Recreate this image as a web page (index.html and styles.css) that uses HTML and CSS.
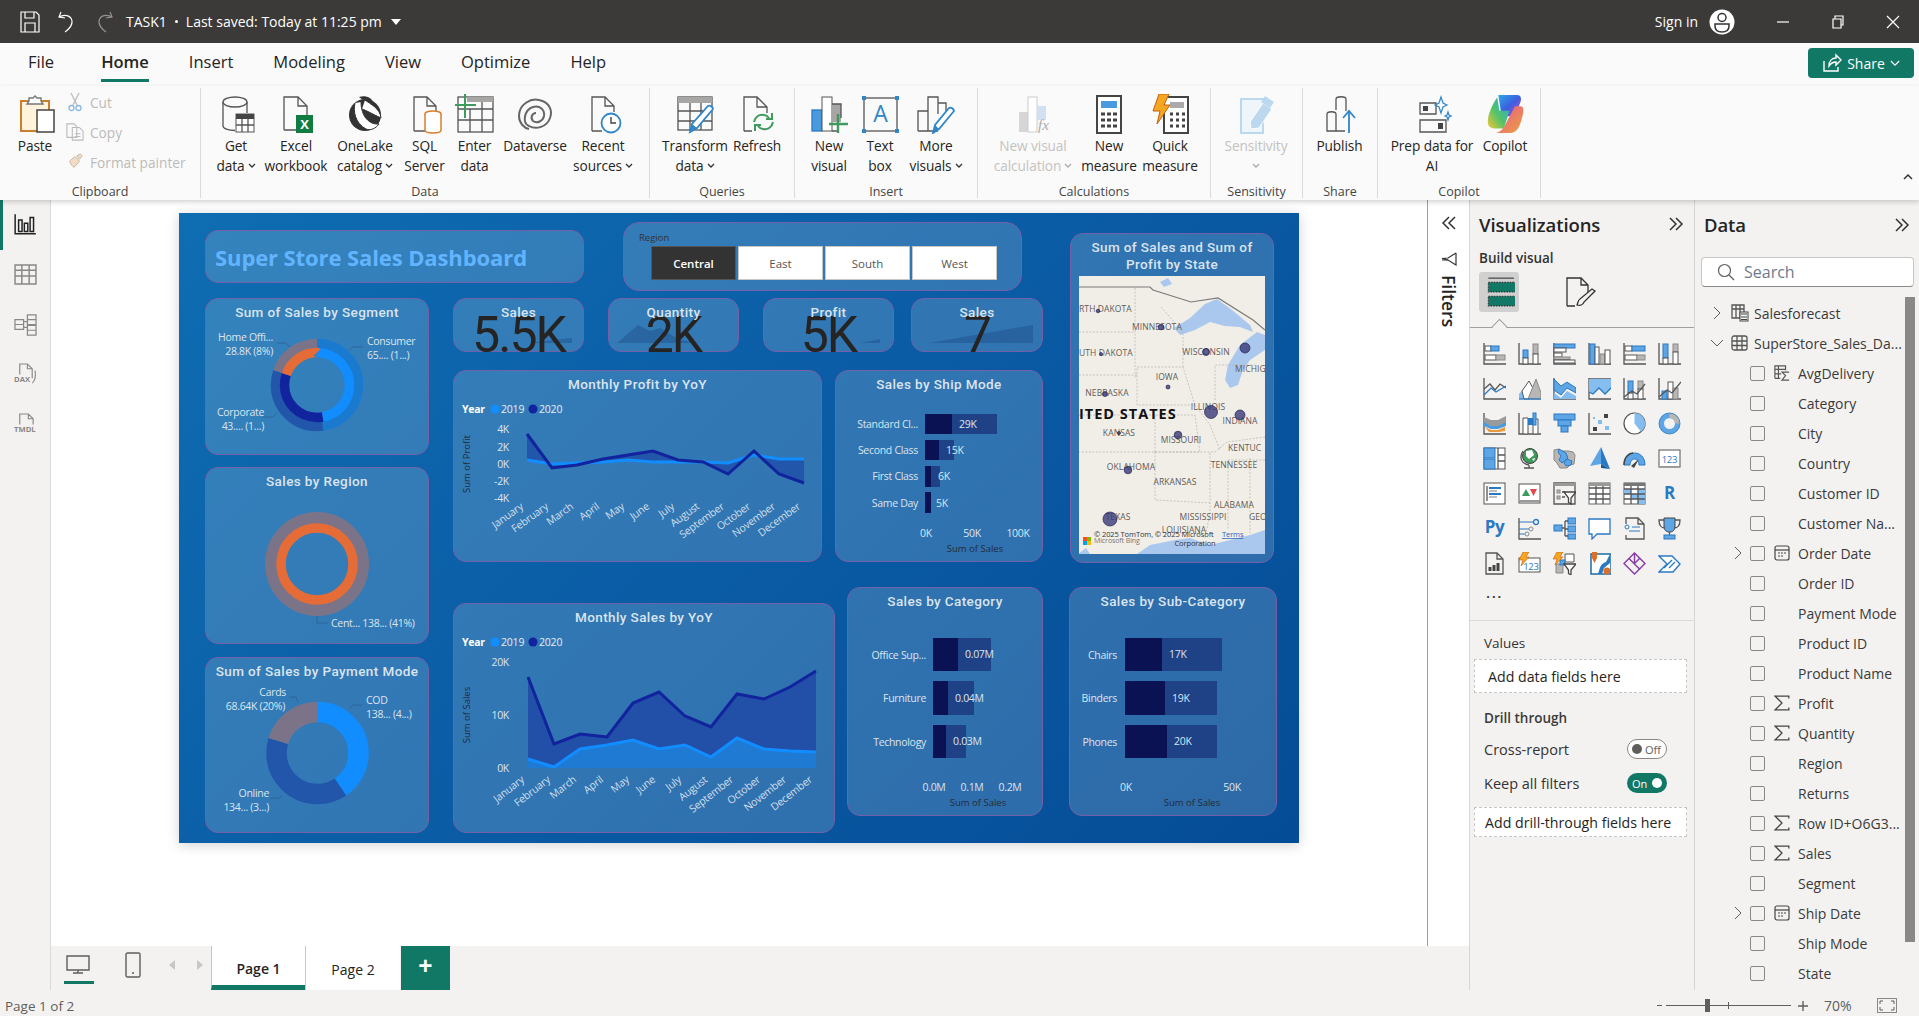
FILE: index.html
```html
<!DOCTYPE html>
<html lang="en">
<head>
<meta charset="utf-8">
<title>TASK1 - Power BI Desktop</title>
<link rel="stylesheet" href="styles.css">
</head>
<body>
<div class="app">

<header class="titlebar">
  <div class="tb-left">
    <svg class="tb-ic" viewBox="0 0 20 22"><path class="tl" d="M1 1h15l3 3v17H1zM5 1v6h9V1M5 21v-9h10v9"/></svg>
    <svg class="tb-ic" viewBox="0 0 20 22"><path class="tl" d="M4 1 2 6l6 1M2 6c5-3 12-2 13 4 .6 4-3 8-7 11"/></svg>
    <svg class="tb-ic dim" viewBox="0 0 20 22"><path class="tl" d="M16 1l2 5-6 1M18 6c-5-3-12-2-13 4-.6 4 3 8 7 11"/></svg>
    <span class="tb-name">TASK1</span><span class="tb-dot"></span><span class="tb-saved">Last saved: Today at 11:25 pm</span><span class="tb-caret"></span>
  </div>
  <div class="tb-right">
    <span class="tb-sign">Sign in</span>
    <svg class="tb-av" viewBox="0 0 26 26"><circle cx="13" cy="13" r="12.5" fill="#fff"/><circle cx="13" cy="8.5" r="4" fill="none" stroke="#333" stroke-width="1.5"/><path d="M6 15h14v2c0 4-3 6-7 6s-7-2-7-6z" fill="none" stroke="#333" stroke-width="1.5"/></svg>
    <svg class="tb-win w-min" viewBox="0 0 14 14"><path class="tl" d="M1 7h12"/></svg>
    <svg class="tb-win w-max" viewBox="0 0 14 14"><path class="tl" d="M2 4h8v9H2zM4 4V1h8v9h-2"/></svg>
    <svg class="tb-win w-close" viewBox="0 0 14 14"><path class="tl" d="M1 1l12 12M13 1 1 13"/></svg>
  </div>
</header>

<nav class="tabs">
  <span class="tab">File</span>
  <span class="tab tab-on">Home</span>
  <span class="tab">Insert</span>
  <span class="tab">Modeling</span>
  <span class="tab">View</span>
  <span class="tab">Optimize</span>
  <span class="tab">Help</span>
  <button class="share"><svg class="share-ic" viewBox="0 0 20 20"><path d="M2 8v10h14v-4M7 13c0-5 3-8 7-8V2l5 5-5 5V9c-3 0-5 1-7 4z" fill="none" stroke="#fff" stroke-width="1.4"/></svg>Share<svg class="share-ch" viewBox="0 0 12 8"><path d="M1 1l5 5 5-5" fill="none" stroke="#fff" stroke-width="1.4"/></svg></button>
</nav>

<section class="ribbon">
  <div class="grp g-clip">
    <div class="grp-body cols-clip">
      <div class="ri">
        <svg class="ric" viewBox="0 0 40 40"><path d="M6 7h28v30H6z" fill="#fff3dc" stroke="#c8802a" stroke-width="2"/><path d="M14 7V4h4l2-2 2 2h4v3l2 3H12z" fill="#fff" stroke="#777" stroke-width="1.4"/><rect x="22" y="16" width="17" height="22" fill="#fff" stroke="#444" stroke-width="1.5"/></svg>
        <span class="rl">Paste</span>
      </div>
      <div class="rsmall">
        <div class="rs"><svg class="rs-ic" viewBox="0 0 16 20"><path d="M4 1l6 12M12 1 6 13" fill="none" stroke="#bbb" stroke-width="1.3"/><circle cx="4.500" cy="16" r="2.500" fill="none" stroke="#8cb8dc" stroke-width="1.3"/><circle cx="11.500" cy="16" r="2.500" fill="none" stroke="#8cb8dc" stroke-width="1.3"/></svg>Cut</div>
        <div class="rs"><svg class="rs-ic" viewBox="0 0 20 20"><path d="M1 1h8l3 3v12H1zM7 5h8l4 4v10H7zM10 12h6M10 15h6" fill="#fafafa" stroke="#bbb" stroke-width="1.2"/></svg>Copy</div>
        <div class="rs"><svg class="rs-ic" viewBox="0 0 20 20"><path d="M12 3l4-2 2 2-3 4zM4 9l6-5 5 5-6 7c-2-1-4-4-5-7z" fill="#f3dcc4" stroke="#c9b8a8" stroke-width="1.1"/></svg>Format painter</div>
      </div>
    </div>
    <div class="gl">Clipboard</div>
  </div>

  <div class="grp g-data">
    <div class="grp-body cols-data">
      <div class="ri"><svg class="ric" viewBox="0 0 40 40"><ellipse class="ln" cx="19" cy="8" rx="12" ry="5"/><path class="ln" d="M7 8v24c0 2.500 5 4.500 12 4.500M31 8v11"/><rect class="wh" x="20" y="20" width="18" height="18"/><rect class="dk" x="20" y="20" width="18" height="5"/><path class="ln" d="M20 31h18M26 25v13M32 25v13"/></svg><span class="rl">Get</span><span class="rl">data<svg class="cv" viewBox="0 0 8 6"><path d="M1 1l3 3 3-3"/></svg></span></div>
      <div class="ri"><svg class="ric" viewBox="0 0 40 40"><path class="ln" d="M8 36V3h14l9 9v10M22 3v9h9M8 36h12"/><rect x="20" y="21" width="17" height="18" fill="#107c41"/><text class="xl" x="28.500" y="35">X</text></svg><span class="rl">Excel</span><span class="rl">workbook</span></div>
      <div class="ri"><svg class="ric" viewBox="0 0 40 40"><circle cx="20" cy="21" r="16" fill="#333"/><path d="M10 9c-2 8 0 20 11 26 5 2 10-1 13-5-10 1-18-8-18-22M20 6c5 4 15 8 16 18-7-3-13-7-19-9" fill="#fff" stroke="#333"/><path d="M14 3c6-2 12 0 14 5-5-1-10-1-14-5z" fill="#333"/></svg><span class="rl">OneLake</span><span class="rl">catalog<svg class="cv" viewBox="0 0 8 6"><path d="M1 1l3 3 3-3"/></svg></span></div>
      <div class="ri"><svg class="ric" viewBox="0 0 40 40"><path class="ln" d="M9 37V3h13l9 9v5M22 3v9h9M9 37h11"/><ellipse cx="28" cy="20" rx="8" ry="3" fill="#fff" stroke="#d8802c" stroke-width="1.5"/><path d="M20 20v16c0 2 3 3 8 3s8-1 8-3V20" fill="#fff" stroke="#d8802c" stroke-width="1.5"/></svg><span class="rl">SQL</span><span class="rl">Server</span></div>
      <div class="ri"><svg class="ric" viewBox="0 0 40 40"><rect class="ln" x="3" y="3" width="35" height="35"/><rect class="gyf" x="12" y="3" width="26" height="5"/><path class="ln" d="M3 15h35M3 26h35M15 15v23M27 8v30"/><path d="M10 0v24M0 11h21" stroke="#3f9a5e" stroke-width="2" fill="none"/></svg><span class="rl">Enter</span><span class="rl">data</span></div>
      <div class="ri"><svg class="ric" viewBox="0 0 40 40"><path d="M4 22C4 10 16 4 24 6c10 2 14 10 11 18-3 9-14 12-21 8C7 29 9 16 18 13c7-2 12 3 11 9-1 5-7 8-11 5-3-3-1-8 3-8" fill="none" stroke="#666" stroke-width="2"/><path d="M4 22c0 7 5 12 10 13" fill="none" stroke="#666" stroke-width="2"/></svg><span class="rl">Dataverse</span></div>
      <div class="ri"><svg class="ric" viewBox="0 0 40 40"><path class="ln" d="M9 37V3h13l9 9v6M22 3v9h9M9 37h10"/><circle cx="28" cy="29" r="9.500" fill="#fff" stroke="#2f86c9" stroke-width="1.800"/><path d="M28 23v6h5" fill="none" stroke="#444" stroke-width="1.400"/></svg><span class="rl">Recent</span><span class="rl">sources<svg class="cv" viewBox="0 0 8 6"><path d="M1 1l3 3 3-3"/></svg></span></div>
    </div>
    <div class="gl">Data</div>
  </div>

  <div class="grp g-query">
    <div class="grp-body cols-query">
      <div class="ri"><svg class="ric" viewBox="0 0 40 40"><rect class="ln" x="3" y="3" width="34" height="33"/><rect class="gyf" x="3" y="3" width="34" height="6"/><path class="ln" d="M3 17h34M3 27h34M15 9v27M26 9v27"/><path d="M15 38l2-8 16-18c2-1 5 1 5 3L22 34z" fill="#fff" stroke="#2f86c9" stroke-width="1.800"/><path d="M15 39l2-9 5 4z" fill="#2f86c9"/></svg><span class="rl">Transform</span><span class="rl">data<svg class="cv" viewBox="0 0 8 6"><path d="M1 1l3 3 3-3"/></svg></span></div>
      <div class="ri"><svg class="ric" viewBox="0 0 40 40"><path class="ln" d="M7 37V3h13l10 10v6M20 3v10h10M7 37h8"/><path d="M17 28c1-5 5-8 10-7 3 0 4 2 5 3M36 28c-1 5-5 8-10 7-3 0-4-2-5-3" fill="none" stroke="#3f9a5e" stroke-width="2"/><path d="M35 19v6h-6M18 37v-6h6" fill="none" stroke="#3f9a5e" stroke-width="2"/></svg><span class="rl">Refresh</span></div>
    </div>
    <div class="gl">Queries</div>
  </div>

  <div class="grp g-insert">
    <div class="grp-body cols-insert">
      <div class="ri"><svg class="ric" viewBox="0 0 40 40"><rect x="3" y="16" width="10" height="21" fill="#4a9ae0" stroke="#2b79c2" stroke-width="1.300"/><rect class="wh" x="13" y="3" width="10" height="34"/><rect class="gyf" x="23" y="10" width="9" height="18"/><path class="ln" d="M23 10h9v14M23 37h5"/><path d="M29 20v19M20 30h19" stroke="#3f9a5e" stroke-width="2.400" fill="none"/></svg><span class="rl">New</span><span class="rl">visual</span></div>
      <div class="ri"><svg class="ric" viewBox="0 0 40 40"><rect class="ln" x="4" y="4" width="33" height="33"/><g class="hd"><rect x="2" y="2" width="4" height="4"/><rect x="35" y="2" width="4" height="4"/><rect x="2" y="35" width="4" height="4"/><rect x="35" y="35" width="4" height="4"/></g><text class="ta" x="20.500" y="28">A</text></svg><span class="rl">Text</span><span class="rl">box</span></div>
      <div class="ri"><svg class="ric" viewBox="0 0 40 40"><path class="ln" d="M2 37V17h10M12 37V3h10v17M22 37h-20M22 9h8v8"/><path d="M17 39l2-8 14-17c2-1 5 1 5 3L23 35z" fill="#fff" stroke="#2f86c9" stroke-width="1.800"/><path d="M17 39l2-8 4 4z" fill="#2f86c9"/></svg><span class="rl">More</span><span class="rl">visuals<svg class="cv" viewBox="0 0 8 6"><path d="M1 1l3 3 3-3"/></svg></span></div>
    </div>
    <div class="gl">Insert</div>
  </div>

  <div class="grp g-calc">
    <div class="grp-body cols-calc">
      <div class="ri off"><svg class="ric" viewBox="0 0 40 40"><rect x="6" y="18" width="9" height="20" fill="#d6d6d6"/><rect x="15" y="3" width="9" height="35" fill="#fff" stroke="#ccc"/><rect x="24" y="12" width="9" height="14" fill="#cfe2f4"/><text class="fx" x="25" y="36">fx</text></svg><span class="rl">New visual</span><span class="rl">calculation<svg class="cv" viewBox="0 0 8 6"><path d="M1 1l3 3 3-3"/></svg></span></div>
      <div class="ri"><svg class="ric" viewBox="0 0 40 40"><rect x="8" y="2" width="24" height="37" fill="#fff" stroke="#444" stroke-width="2"/><rect x="12" y="7" width="16" height="7" fill="#4a9ae0"/><path d="M12 20h4M18 20h4M24 20h4M12 26h4M18 26h4M24 26h4M12 32h4M18 32h4M24 32h4" stroke="#444" stroke-width="3"/></svg><span class="rl">New</span><span class="rl">measure</span></div>
      <div class="ri"><svg class="ric" viewBox="0 0 40 40"><rect x="14" y="3" width="24" height="36" fill="#fff" stroke="#444" stroke-width="2"/><rect x="20" y="8" width="14" height="6" fill="#aaa"/><path d="M20 20h3M26 20h3M32 20h3M20 26h3M26 26h3M32 26h3M20 32h3M26 32h3M32 32h3" stroke="#444" stroke-width="3"/><path d="M9 0h10l-5 11h6L7 30l3-13H3z" fill="#f5a623" stroke="#c75f0a"/></svg><span class="rl">Quick</span><span class="rl">measure</span></div>
    </div>
    <div class="gl">Calculations</div>
  </div>

  <div class="grp g-sens">
    <div class="grp-body cols-one">
      <div class="ri off"><svg class="ric" viewBox="0 0 40 40"><path d="M5 5h22v34H5z" fill="#eef5fb" stroke="#bcd8ee" stroke-width="2"/><path d="M14 28 27 9l9 6-13 19-8 1z" fill="#bcd8ee" stroke="#fff"/><path d="M29 2l9 6-4 6-9-6z" fill="#bcd8ee"/></svg><span class="rl">Sensitivity</span><span class="rl"><svg class="cv" viewBox="0 0 8 6"><path d="M1 1l3 3 3-3"/></svg></span></div>
    </div>
    <div class="gl">Sensitivity</div>
  </div>

  <div class="grp g-share">
    <div class="grp-body cols-one">
      <div class="ri"><svg class="ric" viewBox="0 0 40 40"><path class="ln" d="M16 16V5c0-3 10-3 10 0v12M7 37V20c0-3 9-3 9 0v17zM16 37h9"/><path d="M29 39V18M23 24l6-7 6 7" fill="none" stroke="#2f86c9" stroke-width="1.800"/></svg><span class="rl">Publish</span></div>
    </div>
    <div class="gl">Share</div>
  </div>

  <div class="grp g-copilot">
    <div class="grp-body cols-copilot">
      <div class="ri"><svg class="ric" viewBox="0 0 40 40"><path class="ln" d="M8 9h16v11H8zM8 26h26v12H8z"/><rect class="dk" x="11" y="12" width="5" height="5"/><rect class="dk" x="26" y="29" width="5" height="6"/><path d="M29 3l2 6 4 2-4 2-2 6-2-6-4-2 4-2zM36 18l1 3 2 1-2 1-1 3-1-3-2-1 2-1z" fill="none" stroke="#2f86c9" stroke-width="1.200"/></svg><span class="rl">Prep data for</span><span class="rl">AI</span></div>
      <div class="ri"><svg class="ric" viewBox="3 2 34 36"><defs><linearGradient id="cp1" x1="0" y1="0" x2="1" y2="1"><stop offset="0" stop-color="#2aa8e6"/><stop offset=".5" stop-color="#3c5fe0"/><stop offset="1" stop-color="#c64bd0"/></linearGradient><linearGradient id="cp2" x1="0" y1="1" x2="1" y2="0"><stop offset="0" stop-color="#f4c534"/><stop offset=".45" stop-color="#4fc36a"/><stop offset="1" stop-color="#2aa8e6"/></linearGradient><linearGradient id="cp3" x1="0" y1="0" x2="1" y2="1"><stop offset="0" stop-color="#e0588c"/><stop offset="1" stop-color="#f0a040"/></linearGradient></defs><path d="M14 3h17c3 0 4 3 3 6l-5 13H17z" fill="url(#cp1)"/><path d="M13 5C8 12 3 24 5 30c1 2 3 3 5 3h9l5-16H15z" fill="url(#cp2)"/><path d="M29 13h5c3 0 3 4 2 8-2 8-4 16-11 16H12c4-1 7-4 9-9z" fill="url(#cp3)"/></svg><span class="rl">Copilot</span></div>
    </div>
    <div class="gl">Copilot</div>
  </div>
  <svg class="collapse" viewBox="0 0 10 7"><path d="M1 6l4-4 4 4" fill="none" stroke="#333" stroke-width="1.500"/></svg>
</section>

<main class="main">
  <aside class="rail">
    <div class="rail-on"><svg class="rail-ic" viewBox="0 0 20 20"><path d="M1 1v17h18M4 6h3v10H4zM9 9h3v7H9zM14 4h3v12h-3z" fill="none" stroke="#222" stroke-width="1.300"/></svg></div>
    <div class="rail-it"><svg class="rail-ic" viewBox="0 0 22 22"><path d="M1 2h20v18H1zM1 7h20M1 12.500h20M7.500 2v18M14.500 2v18" fill="none" stroke="#8a8886" stroke-width="1.400"/></svg></div>
    <div class="rail-it"><svg class="rail-ic" viewBox="0 0 24 24"><path d="M14 2h9v10h-9zM14 7h9M14 13h9v10h-9zM14 18h9M1 7h9v10H1zM1 12h9M10 9h4M10 15h4" fill="none" stroke="#8a8886" stroke-width="1.300"/></svg></div>
    <div class="rail-it"><svg class="rail-ic" viewBox="0 0 24 24"><path d="M6 12V1h8l5 5v10M14 1v5h5M22 8c1 5 0 11-3 13" fill="none" stroke="#8a8886" stroke-width="1.200"/><text class="rail-t" x="0" y="20">DAX</text></svg></div>
    <div class="rail-it"><svg class="rail-ic" viewBox="0 0 24 24"><path d="M6 12V1h9l5 5v6M15 1v5h5" fill="none" stroke="#8a8886" stroke-width="1.200"/><text class="rail-t" x="0" y="20">TMDL</text></svg></div>
  </aside>

  <div class="center">
    <div class="center-top">
      <div class="canvas">
        <div class="page">

          <div class="card v-title"><span class="dash-title">Super Store Sales Dashboard</span></div>

          <div class="card v-slicer">
            <div class="sl-label">Region</div>
            <div class="sl-row">
              <span class="sl-btn sl-on">Central</span><span class="sl-btn">East</span><span class="sl-btn">South</span><span class="sl-btn">West</span>
            </div>
          </div>

          <div class="card v-seg">
            <div class="ct">Sum of Sales by Segment</div>
            <svg class="vz" viewBox="205 298 224 157">
              <g transform="rotate(-90 317 385)" fill="none" stroke-width="9.500">
                <circle cx="317" cy="385" r="41.500" pathLength="360" stroke="#1a7ad0" stroke-dasharray="172 188"/>
                <circle cx="317" cy="385" r="41.500" pathLength="360" stroke="#2256ab" stroke-dasharray="117 243" stroke-dashoffset="-172"/>
                <circle cx="317" cy="385" r="41.500" pathLength="360" stroke="#7b7489" stroke-dasharray="71 289" stroke-dashoffset="-289"/>
                <circle cx="317" cy="385" r="32.500" pathLength="360" stroke="#118dff" stroke-dasharray="170 190"/>
                <circle cx="317" cy="385" r="32.500" pathLength="360" stroke="#12239e" stroke-dasharray="119 241" stroke-dashoffset="-170"/>
                <circle cx="317" cy="385" r="32.500" pathLength="360" stroke="#e66c37" stroke-dasharray="71 289" stroke-dashoffset="-289"/>
              </g>
              <path class="lead" d="M277 343h9l4 4M263 417h10l4-4M363 347h-10l-4 3"/>
              <text class="lb ae" x="273" y="341">Home Offi...</text><text class="lb ae" x="273" y="355">28.8K (8%)</text>
              <text class="lb" x="367" y="345">Consumer</text><text class="lb" x="367" y="359">65.... (1...)</text>
              <text class="lb ae" x="264" y="416">Corporate</text><text class="lb ae" x="264" y="430">43.... (1...)</text>
            </svg>
          </div>

          <div class="card v-reg">
            <div class="ct">Sales by Region</div>
            <svg class="vz" viewBox="205 467 224 177">
              <circle cx="317" cy="564" r="46" fill="none" stroke="#7b7489" stroke-width="12"/>
              <circle cx="317" cy="564" r="36" fill="none" stroke="#e66c37" stroke-width="9.500"/>
              <path class="lead" d="M317 616v7h11"/>
              <text class="lb" x="331" y="627">Cent... 138... (41%)</text>
            </svg>
          </div>

          <div class="card v-pay">
            <div class="ct">Sum of Sales by Payment Mode</div>
            <svg class="vz" viewBox="205 657 224 176">
              <g transform="rotate(-90 317.500 753)" fill="none" stroke-width="20.500">
                <circle cx="317.500" cy="753" r="41" pathLength="360" stroke="#118dff" stroke-dasharray="146 214"/>
                <circle cx="317.500" cy="753" r="41" pathLength="360" stroke="#2256ab" stroke-dasharray="141 219" stroke-dashoffset="-146"/>
                <circle cx="317.500" cy="753" r="41" pathLength="360" stroke="#7b7489" stroke-dasharray="73 287" stroke-dashoffset="-287"/>
              </g>
              <path class="lead" d="M289 697h7l2 6M362 705h-9l-3 3M270 798h9l3-2"/>
              <text class="lb ae" x="286" y="696">Cards</text><text class="lb ae" x="285" y="710">68.64K (20%)</text>
              <text class="lb" x="366" y="704">COD</text><text class="lb" x="366" y="718">138... (4...)</text>
              <text class="lb ae" x="269" y="797">Online</text><text class="lb ae" x="269" y="811">134... (3...)</text>
            </svg>
          </div>

          <div class="card v-k1">
            <svg class="vz" viewBox="453 298 131 54"><path class="spark" d="M530 343l22-3 20-2v5z"/></svg>
            <div class="ct">Sales</div><div class="kv kv1">5.5K</div>
          </div>
          <div class="card v-k2">
            <svg class="vz" viewBox="608 298 131 54"><path class="spark" d="M617 343l21-18 12 6 10-3 20 12 20 3z"/></svg>
            <div class="ct">Quantity</div><div class="kv">2K</div>
          </div>
          <div class="card v-k3">
            <svg class="vz" viewBox="763 298 131 54"><path class="spark" d="M860 343l20-4v4z"/></svg>
            <div class="ct">Profit</div><div class="kv">5K</div>
          </div>
          <div class="card v-k4">
            <svg class="vz" viewBox="911 298 132 54"><path class="spark" d="M929 343l104-18v18z"/></svg>
            <div class="ct">Sales</div><div class="kv">7</div>
          </div>

          <div class="card v-profit">
            <div class="ct">Monthly Profit by YoY</div>
            <svg class="vz" viewBox="453 370 369 192">
              <text class="lg" x="462" y="413">Year</text><circle cx="495" cy="409" r="4.500" fill="#118dff"/><text class="lb2" x="501" y="413">2019</text><circle cx="533" cy="409" r="4.500" fill="#12239e"/><text class="lb2" x="539" y="413">2020</text>
              <text class="lb ae" x="509" y="433">4K</text><text class="lb ae" x="509" y="451">2K</text><text class="lb ae" x="509" y="468">0K</text><text class="lb ae" x="509" y="485">-2K</text><text class="lb ae" x="509" y="502">-4K</text>
              <text class="axt" transform="rotate(-90 470 464)" x="470" y="464">Sum of Profit</text>
              <path d="M527 434L552 468 577 465 603 459 628 455 653 451 678 460 703 462 728 474 754 451 779 474 804 483V459L779 459 754 455 728 463 703 462 678 462 653 462 628 460 603 462 577 463 552 464 527 460Z" fill="#2256ab"/>
              <path d="M527 460L552 464 577 463 603 462 628 460 653 462 678 462 703 462 728 463 754 455 779 459 804 459" fill="none" stroke="#118dff" stroke-width="3"/>
              <path d="M527 434L552 468 577 465 603 459 628 455 653 451 678 460 703 462 728 474 754 451 779 474 804 483" fill="none" stroke="#12239e" stroke-width="3"/>
              <g class="mon">
                <text transform="rotate(-36 524 508)" x="524" y="508">January</text><text transform="rotate(-36 549 508)" x="549" y="508">February</text><text transform="rotate(-36 574 508)" x="574" y="508">March</text><text transform="rotate(-36 600 508)" x="600" y="508">April</text><text transform="rotate(-36 625 508)" x="625" y="508">May</text><text transform="rotate(-36 650 508)" x="650" y="508">June</text><text transform="rotate(-36 675 508)" x="675" y="508">July</text><text transform="rotate(-36 700 508)" x="700" y="508">August</text><text transform="rotate(-36 725 508)" x="725" y="508">September</text><text transform="rotate(-36 751 508)" x="751" y="508">October</text><text transform="rotate(-36 776 508)" x="776" y="508">November</text><text transform="rotate(-36 801 508)" x="801" y="508">December</text>
              </g>
            </svg>
          </div>

          <div class="card v-ship">
            <div class="ct">Sales by Ship Mode</div>
            <svg class="vz" viewBox="835 370 208 192">
              <rect class="bl2" x="925" y="414" width="72" height="20"/><rect class="bd" x="925" y="414" width="27" height="20"/>
              <rect class="bl2" x="925" y="440" width="29" height="20"/><rect class="bd" x="925" y="440" width="14" height="20"/>
              <rect class="bl2" x="925" y="466" width="15" height="21"/><rect class="bd" x="925" y="466" width="6" height="21"/>
              <rect class="bd" x="925" y="492" width="6" height="21"/>
              <text class="lb" x="959" y="428">29K</text><text class="lb" x="946" y="454">15K</text><text class="lb" x="938" y="480">6K</text><text class="lb" x="936" y="507">5K</text>
              <text class="lb ae" x="918" y="428">Standard Cl...</text><text class="lb ae" x="918" y="454">Second Class</text><text class="lb ae" x="918" y="480">First Class</text><text class="lb ae" x="918" y="507">Same Day</text>
              <text class="lb am" x="926" y="537">0K</text><text class="lb am" x="972" y="537">50K</text><text class="lb am" x="1018" y="537">100K</text>
              <text class="axt" x="975" y="552">Sum of Sales</text>
            </svg>
          </div>

          <div class="card v-map">
            <div class="ct ct2">Sum of Sales and Sum of<br>Profit by State</div>
            <svg class="map" viewBox="1079 276 186 278">
              <rect x="1079" y="276" width="186" height="278" fill="#f1eee8"/>
              <path class="water" d="M1174 328l16-10 15-14 12-5 15 11 18 15 3 7-13-5-15-1-15-4-15 8-15 5zM1257 332l-17 13-12 20-3 15 5 8 8-3 5-15 7-10 15-10v-15zM1137 554l13-9 25-5 15-2 20 7 20-5 20-5 15-5v24zM1160 282l8-4 4 6-8 3zM1078 554l8-6 4 6z"/>
              <path class="border" d="M1079 287h71l3 3 38 12 27-4 35 22 12 10"/>
              <path class="state" d="M1079 332h56M1135 288v90M1079 375h58M1137 367h46l12 38h-58zM1079 415h116l5 37H1079M1155 415v37M1155 452h60l12-10 38-5M1155 452v48l55 3M1195 405l15 20 10 25M1210 453v60l-5 25M1250 458v75M1228 460h37M1228 460v70M1183 367v-35l-22-25M1215 400v-35h40"/>
              <g class="st">
                <text x="1079" y="312">RTH DAKOTA</text><text class="tm" x="1157" y="330">MINNESOTA</text><text x="1079" y="356">UTH DAKOTA</text><text class="tm" x="1206" y="355">WISCONSIN</text><text x="1235" y="372">MICHIG</text><text class="tm" x="1167" y="380">IOWA</text><text class="tm" x="1107" y="396">NEBRASKA</text><text class="tm" x="1208" y="410">ILLINOIS</text><text class="tm" x="1240" y="424">INDIANA</text><text class="tm" x="1119" y="436">KANSAS</text><text class="tm" x="1181" y="443">MISSOURI</text><text x="1228" y="451">KENTUC</text><text class="tm" x="1131" y="470">OKLAHOMA</text><text class="tm" x="1234" y="468">TENNESSEE</text><text class="tm" x="1175" y="485">ARKANSAS</text><text class="tm" x="1234" y="508">ALABAMA</text><text class="tm" x="1203" y="520">MISSISSIPPI</text><text x="1249" y="520">GEO</text><text class="tm" x="1118" y="520">TEXAS</text><text class="tm" x="1184" y="533">LOUISIANA</text>
              </g>
              <text class="us" x="1079" y="419">ITED STATES</text>
              <g class="bub">
                <circle cx="1098" cy="311" r="1.800"/><circle cx="1161" cy="327" r="2.800"/><circle cx="1206" cy="352" r="3.500"/><circle cx="1245" cy="348" r="5"/><circle cx="1101" cy="354" r="1.500"/><circle cx="1168" cy="387" r="2"/><circle cx="1105" cy="394" r="2.500"/><circle cx="1211" cy="412" r="6.500"/><circle cx="1240" cy="415" r="5"/><circle cx="1119" cy="433" r="1.500"/><circle cx="1178" cy="435" r="3.800"/><circle cx="1128" cy="470" r="3.800"/><circle cx="1110" cy="519" r="7"/>
              </g>
              <rect x="1083" y="537" width="4" height="4" fill="#f25022"/><rect x="1087" y="537" width="4" height="4" fill="#7fba00"/><rect x="1083" y="541" width="4" height="4" fill="#00a4ef"/><rect x="1087" y="541" width="4" height="4" fill="#ffb900"/>
              <text class="attr" x="1094" y="537">© 2025 TomTom, © 2025 Microsoft</text><text class="attr terms" x="1222" y="537">Terms</text><text class="attr bing" x="1094" y="543">Microsoft Bing</text><text class="attr tm" x="1195" y="546">Corporation</text>
            </svg>
          </div>

          <div class="card v-sales">
            <div class="ct">Monthly Sales by YoY</div>
            <svg class="vz" viewBox="453 603 382 230">
              <text class="lg" x="462" y="646">Year</text><circle cx="495" cy="642" r="4.500" fill="#118dff"/><text class="lb2" x="501" y="646">2019</text><circle cx="533" cy="642" r="4.500" fill="#12239e"/><text class="lb2" x="539" y="646">2020</text>
              <text class="lb ae" x="509" y="666">20K</text><text class="lb ae" x="509" y="719">10K</text><text class="lb ae" x="509" y="772">0K</text>
              <text class="axt" transform="rotate(-90 470 715)" x="470" y="715">Sum of Sales</text>
              <path d="M528 677L554 744 580 734 607 737 633 703 659 692 685 716 711 727 737 694 764 699 790 687 816 671V768H528Z" fill="#2250a8"/>
              <path d="M528 759L554 767 580 749 607 745 633 740 659 749 685 745 711 757 737 738 764 749 790 751 816 752V768H528Z" fill="#1f7ad4"/>
              <path d="M528 677L554 744 580 734 607 737 633 703 659 692 685 716 711 727 737 694 764 699 790 687 816 671" fill="none" stroke="#12239e" stroke-width="3"/>
              <path d="M528 759L554 767 580 749 607 745 633 740 659 749 685 745 711 757 737 738 764 749 790 751 816 752" fill="none" stroke="#118dff" stroke-width="3"/>
              <g class="mon">
                <text transform="rotate(-38 525 781)" x="525" y="781">January</text><text transform="rotate(-38 551 781)" x="551" y="781">February</text><text transform="rotate(-38 577 781)" x="577" y="781">March</text><text transform="rotate(-38 604 781)" x="604" y="781">April</text><text transform="rotate(-38 630 781)" x="630" y="781">May</text><text transform="rotate(-38 656 781)" x="656" y="781">June</text><text transform="rotate(-38 682 781)" x="682" y="781">July</text><text transform="rotate(-38 708 781)" x="708" y="781">August</text><text transform="rotate(-38 734 781)" x="734" y="781">September</text><text transform="rotate(-38 761 781)" x="761" y="781">October</text><text transform="rotate(-38 787 781)" x="787" y="781">November</text><text transform="rotate(-38 813 781)" x="813" y="781">December</text>
              </g>
            </svg>
          </div>

          <div class="card v-cat">
            <div class="ct">Sales by Category</div>
            <svg class="vz" viewBox="847 587 196 229">
              <rect class="bl2" x="933" y="638" width="58" height="33"/><rect class="bd" x="933" y="638" width="25" height="33"/>
              <rect class="bl2" x="933" y="681" width="41" height="34"/><rect class="bd" x="933" y="681" width="15" height="34"/>
              <rect class="bl2" x="933" y="725" width="33" height="33"/><rect class="bd" x="933" y="725" width="13" height="33"/>
              <text class="lb" x="965" y="658">0.07M</text><text class="lb" x="955" y="702">0.04M</text><text class="lb" x="953" y="745">0.03M</text>
              <text class="lb ae" x="926" y="659">Office Sup...</text><text class="lb ae" x="926" y="702">Furniture</text><text class="lb ae" x="926" y="746">Technology</text>
              <text class="lb am" x="934" y="791">0.0M</text><text class="lb am" x="972" y="791">0.1M</text><text class="lb am" x="1010" y="791">0.2M</text>
              <text class="axt" x="978" y="806">Sum of Sales</text>
            </svg>
          </div>

          <div class="card v-sub">
            <div class="ct">Sales by Sub-Category</div>
            <svg class="vz" viewBox="1069 587 208 229">
              <rect class="bl2" x="1125" y="638" width="97" height="33"/><rect class="bd" x="1125" y="638" width="37" height="33"/>
              <rect class="bl2" x="1125" y="681" width="92" height="34"/><rect class="bd" x="1125" y="681" width="40" height="34"/>
              <rect class="bl2" x="1125" y="725" width="92" height="33"/><rect class="bd" x="1125" y="725" width="42" height="33"/>
              <text class="lb" x="1169" y="658">17K</text><text class="lb" x="1172" y="702">19K</text><text class="lb" x="1174" y="745">20K</text>
              <text class="lb ae" x="1117" y="659">Chairs</text><text class="lb ae" x="1117" y="702">Binders</text><text class="lb ae" x="1117" y="746">Phones</text>
              <text class="lb am" x="1126" y="791">0K</text><text class="lb am" x="1232" y="791">50K</text>
              <text class="axt" x="1192" y="806">Sum of Sales</text>
            </svg>
          </div>

        </div>
      </div>
      <aside class="filters">
        <svg class="dbl" viewBox="0 0 16 14"><path d="M8 1 2 7l6 6M14 1 8 7l6 6" fill="none" stroke="#333" stroke-width="1.500"/></svg>
        <svg class="funnel" viewBox="0 0 16 14"><path d="M15 1v12l-8-5H1l6 0" fill="none" stroke="#333" stroke-width="1.200"/><path d="M15 1 7 6 1 6.500l6 1.500" fill="none" stroke="#333" stroke-width="1.200"/></svg>
        <span class="f-text">Filters</span>
      </aside>
    </div>

    <div class="pagebar">
      <div class="pb-view pb-on"><svg class="pb-d" viewBox="0 0 24 20"><path d="M1 1h22v14H1zM12 15v3M7 18h10" fill="none" stroke="#605e5c" stroke-width="1.400"/></svg></div>
      <div class="pb-view"><svg class="pb-p" viewBox="0 0 16 26"><rect x="1" y="1" width="14" height="24" rx="1.500" fill="none" stroke="#605e5c" stroke-width="1.400"/><path d="M7 21h2" stroke="#605e5c" stroke-width="1.400"/></svg></div>
      <div class="pb-arrows"><svg class="pb-a" viewBox="0 0 8 12"><path d="M7 1v10L1 6z" fill="#c8c6c4"/></svg><svg class="pb-a" viewBox="0 0 8 12"><path d="M1 1v10l6-5z" fill="#c8c6c4"/></svg></div>
      <div class="ptab ptab-on">Page 1</div>
      <div class="ptab">Page 2</div>
      <div class="padd">+</div>
    </div>
  </div>

  <aside class="viz">
    <div class="p-head"><span class="p-title">Visualizations</span><svg class="dbl" viewBox="0 0 16 14"><path d="M2 1l6 6-6 6M8 1l6 6-6 6" fill="none" stroke="#333" stroke-width="1.500"/></svg></div>
    <div class="p-sub">Build visual</div>
    <div class="modes">
      <div class="mode-on"><svg class="mode-ic" viewBox="0 0 30 30"><path d="M5 2h24" stroke="#333"/><rect x="5" y="6" width="26" height="9" fill="#117865" stroke="#333" stroke-dasharray="1.500 1"/><rect x="5" y="19" width="26" height="9" fill="#117865" stroke="#333" stroke-dasharray="1.500 1"/></svg></div>
      <svg class="mode-fmt" viewBox="0 0 32 30"><path d="M2 29V1h14l7 7v7M16 1v7h7M2 29h8" fill="none" stroke="#333" stroke-width="1.300"/><path d="M12 28c3 1 6 0 7-3l11-11-3-2-12 10c-2 1-2 4-3 6z" fill="none" stroke="#333" stroke-width="1.300"/></svg>
    </div>
    <div class="notch"></div>
    <div class="vgrid">
      <svg class="vi" viewBox="0 0 23 23"><path class="ln" d="M1 1v21h22"/><rect class="wh" x="2" y="4" width="6" height="5"/><rect class="bl" x="8" y="4" width="8" height="5"/><rect class="wh" x="2" y="13" width="11" height="5"/><rect class="gr" x="13" y="13" width="9" height="5"/></svg>
      <svg class="vi" viewBox="0 0 23 23"><path class="ln" d="M1 1v21h22"/><rect class="bl" x="5" y="8" width="5" height="8"/><rect class="wh" x="5" y="16" width="5" height="6"/><rect class="gr" x="15" y="2" width="5" height="10"/><rect class="wh" x="15" y="12" width="5" height="10"/></svg>
      <svg class="vi" viewBox="0 0 23 23"><path class="ln" d="M1 1v21h22"/><rect class="bl" x="1" y="2" width="21" height="4"/><rect class="wh" x="1" y="6" width="12" height="4"/><rect class="wh" x="1" y="11" width="8" height="4"/><rect class="gr" x="1" y="15" width="16" height="2.500"/><rect class="wh" x="1" y="18" width="21" height="3"/></svg>
      <svg class="vi" viewBox="0 0 23 23"><path class="ln" d="M1 1v21h22"/><rect class="bl" x="2" y="2" width="5" height="20"/><rect class="wh" x="7" y="5" width="4" height="17"/><rect class="gr" x="12" y="12" width="5" height="10"/><rect class="wh" x="17" y="8" width="5" height="14"/></svg>
      <svg class="vi" viewBox="0 0 23 23"><path class="ln" d="M1 1v21h22"/><rect class="wh" x="2" y="4" width="7" height="5"/><rect class="bl" x="9" y="4" width="13" height="5"/><rect class="wh" x="2" y="13" width="12" height="5"/><rect class="gr" x="14" y="13" width="8" height="5"/></svg>
      <svg class="vi" viewBox="0 0 23 23"><path class="ln" d="M1 1v21h22"/><rect class="bl" x="5" y="2" width="5" height="14"/><rect class="wh" x="5" y="16" width="5" height="6"/><rect class="gr" x="15" y="2" width="5" height="8"/><rect class="wh" x="15" y="10" width="5" height="12"/></svg>

      <svg class="vi" viewBox="0 0 23 23"><path class="ln" d="M1 1v21h22"/><path class="ln" d="M1 12l6-5 5 6 5-6 6 4"/><path class="lnb" d="M1 18l7-7 5 4 5-3 5-3"/></svg>
      <svg class="vi" viewBox="0 0 23 23"><path class="lbf" d="M1 22v-5l5-6 5 11z"/><path class="wh" d="M4 14l7-10 5 9-5 9H6z"/><path class="gr" d="M14 12l4-10 5 14v6H10z"/><path class="lnb" d="M1 22h22"/></svg>
      <svg class="vi" viewBox="0 0 23 23"><path class="ln" d="M1 1v21h22"/><path class="bl" d="M1 2l7 7 6-4 9 6v5l-9-5-6 7-7-5z"/><path class="lbf" d="M1 16l7 5 6-7 9 5v3H1z"/></svg>
      <svg class="vi" viewBox="0 0 23 23"><path class="ln" d="M1 2h22M1 1v21h22"/><path class="lbf" d="M1 2h22v9l-6 6-6-6-6 6-4-2z"/><path class="lnb" d="M1 15l4 2 6-6 6 6 6-6"/></svg>
      <svg class="vi" viewBox="0 0 23 23"><path class="ln" d="M1 1v21h22"/><rect class="bl" x="5" y="4" width="5" height="12"/><rect class="wh" x="5" y="16" width="5" height="6"/><rect class="gr" x="15" y="4" width="5" height="8"/><rect class="wh" x="15" y="12" width="5" height="10"/><path class="ln" d="M1 20l8-6 5 3 8-10"/></svg>
      <svg class="vi" viewBox="0 0 23 23"><path class="ln" d="M1 1v21h22"/><rect class="bl" x="4" y="14" width="5" height="8"/><rect class="wh" x="10" y="5" width="5" height="17"/><rect class="gr" x="15" y="11" width="5" height="11"/><path class="ln" d="M1 20l8-7 5 3 9-11"/></svg>

      <svg class="vi" viewBox="0 0 23 23"><path class="ln" d="M1 1v21h22"/><path d="M1 5l7 3h7l8-4v7l-7 3H8l-7-3z" fill="#9a9a9a"/><path d="M1 10l7 4h7l8-4v4l-8 3H8l-7-3z" fill="#4a9ae0"/><path d="M2 15l6 3 7 0 7-3v4l-6 1H6z" fill="#e99a3c"/></svg>
      <svg class="vi" viewBox="0 0 23 23"><path class="ln" d="M1 1v21h22"/><path class="wh" d="M5 6h5v16H5zM15 7h5v15h-5z"/><rect class="dk2" x="10" y="6" width="5" height="7"/><rect class="bl" x="15" y="1" width="3" height="12"/></svg>
      <svg class="vi" viewBox="0 0 23 23"><rect class="bl" x="1" y="2" width="21" height="6"/><rect class="bl" x="5" y="8" width="13" height="6"/><rect class="bl" x="8" y="14" width="7" height="6"/></svg>
      <svg class="vi" viewBox="0 0 23 23"><path class="ln" d="M1 1v21h22"/><rect class="dk" x="16" y="2" width="4" height="4"/><rect class="lbf" x="10" y="8" width="4" height="4"/><rect class="lbf" x="5" y="5" width="2" height="2"/><rect class="dk" x="5" y="15" width="4" height="4"/><rect class="lbf" x="17" y="14" width="4" height="4"/></svg>
      <svg class="vi" viewBox="0 0 23 23"><circle cx="11.500" cy="11.500" r="10.500" fill="#fff" stroke="#555" stroke-width="1.200"/><path class="lbf" d="M11.500 1A10.500 10.500 0 0 1 18 19.700L11.500 11.500z"/></svg>
      <svg class="vi" viewBox="0 0 23 23"><circle cx="11.500" cy="11.500" r="8" fill="none" stroke="#5ea5e6" stroke-width="5"/><path d="M11.500 3.500A8 8 0 0 1 19.500 11.500" fill="none" stroke="#b9b7b5" stroke-width="5"/><circle cx="11.500" cy="11.500" r="10.500" fill="none" stroke="#2b79c2" stroke-width=".8"/></svg>

      <svg class="vi" viewBox="0 0 23 23"><rect x="1" y="1" width="21" height="21" fill="#fff" stroke="#555"/><rect class="bl" x="1" y="1" width="11" height="10"/><rect class="bl" x="1" y="12" width="11" height="10"/><path class="ln" d="M15 1v21M15 8h7M15 14h7"/></svg>
      <svg class="vi" viewBox="0 0 23 23"><circle cx="12" cy="9" r="7.500" fill="#3f9a5e" stroke="#444"/><path d="M8 4l6-1 2 5-5 4-3-3zM14 12l3-1-1 3z" fill="#fff"/><path class="ln" d="M5 4c-4 6-2 13 6 14M11 18v3M6 21h10"/></svg>
      <svg class="vi" viewBox="0 0 23 23"><path class="gr" d="M1 3l5-1 1 2h8l5 1 2 3-1 9-4 1-3 3H7l-3-5-3-3z"/><path class="bl" d="M6 2l7 4 2 5-6 5-3-3 2-4-3-4z"/><path class="bl" d="M14 12l5 2-1 4-5 1-2-3z"/></svg>
      <svg class="vi" viewBox="0 0 23 23"><path d="M13 0l9 22-9-5z" fill="#2b79c2"/><path d="M13 0 2 19l11-2z" fill="#5ea5e6"/><path d="M13 17l9 5-9-1z" fill="#1c5a96"/></svg>
      <svg class="vi" viewBox="0 0 23 23"><path class="bl" d="M1 18C1 10 6 6 11.500 6S22 10 22 18h-6c0-3-2-6-4.500-6S7 15 7 18z"/><path d="M1 18C1 10 6 6 10 6" fill="none" stroke="#444" stroke-width="1.500"/><path d="M8 19l8-7-5 9z" fill="#444"/></svg>
      <svg class="vi" viewBox="0 0 23 23"><rect x="1" y="3" width="21" height="17" fill="#fff" stroke="#555"/><rect x="1" y="19" width="21" height="1.500" fill="#999"/><text class="n123" x="11.500" y="15.500">123</text></svg>

      <svg class="vi" viewBox="0 0 23 23"><rect x="1" y="1" width="21" height="21" fill="#fff" stroke="#555"/><path class="ln" d="M4 4v15"/><path d="M6 6h12M6 12h12" stroke="#2b79c2" stroke-width="2"/><path d="M6 9h8M6 15h8" stroke="#aaa" stroke-width="1.500"/></svg>
      <svg class="vi" viewBox="0 0 23 23"><rect x="1" y="2" width="21" height="19" fill="#fff" stroke="#555"/><path d="M4 14l4-7 4 7z" fill="#3f9a5e"/><path d="M12 7h7l-3.500 7z" fill="#e04848"/><rect x="1" y="18" width="21" height="2" fill="#999"/></svg>
      <svg class="vi" viewBox="0 0 23 23"><path class="ln" d="M1 1h21v21H1z"/><rect x="1" y="1" width="21" height="3" fill="#999"/><rect class="gr" x="4" y="8" width="3" height="3"/><rect class="gr" x="4" y="14" width="3" height="3"/><path class="ln" d="M9 10h3M9 15h3"/><path d="M11 10h12l-5 6v6l-2.500-1.500V16z" fill="#fff" stroke="#444" stroke-width="1.300"/></svg>
      <svg class="vi" viewBox="0 0 23 23"><rect x="1" y="1" width="21" height="21" fill="#fff" stroke="#666"/><path class="ln" d="M1 6h21M1 12h21M1 17h21M8 1v21M15 1v21"/><rect x="1" y="1" width="21" height="3" fill="#999"/></svg>
      <svg class="vi" viewBox="0 0 23 23"><rect x="1" y="1" width="21" height="21" fill="#fff" stroke="#555"/><rect x="1" y="1" width="21" height="3" fill="#777"/><rect class="lbf" x="1" y="7" width="7" height="5"/><rect class="lbf" x="15" y="7" width="7" height="5"/><rect class="lbf" x="8" y="12" width="7" height="5"/><rect class="lbf" x="15" y="12" width="7" height="5"/><rect class="lbf" x="15" y="17" width="7" height="5"/><path class="ln" d="M1 7h21M1 12h21M1 17h21M8 4v18M15 4v18"/></svg>
      <svg class="vi" viewBox="0 0 23 23"><text class="rtx" x="11.500" y="17">R</text></svg>

      <svg class="vi" viewBox="0 0 23 23"><text class="pyx" x="11.500" y="16">Py</text></svg>
      <svg class="vi" viewBox="0 0 23 23"><path class="ln" d="M1 1v21h22"/><path d="M1 5h14M1 12h10M1 17h6" stroke="#2b79c2" stroke-width="1.200"/><circle cx="18" cy="5" r="2.500" fill="none" stroke="#2b79c2" stroke-width="1.300"/><circle cx="13" cy="12" r="2" fill="none" stroke="#888"/><circle cx="9" cy="17" r="2" fill="none" stroke="#888"/></svg>
      <svg class="vi" viewBox="0 0 23 23"><rect class="bl" x="1" y="8" width="8" height="6"/><rect class="bl" x="15" y="1" width="8" height="6"/><rect class="bl" x="15" y="9" width="8" height="6"/><rect class="bl" x="15" y="17" width="8" height="5"/><path class="ln" d="M9 11h3M12 4v15M12 4h3M12 12h3M12 19h3"/></svg>
      <svg class="vi" viewBox="0 0 23 23"><path d="M1 2h21v15H9l-5 5v-5H1z" fill="#fff" stroke="#2b79c2" stroke-width="1.300"/></svg>
      <svg class="vi" viewBox="0 0 23 23"><path class="ln" d="M3 7V1h12l6 6v15H3v-4M15 1v6h6"/><circle cx="4" cy="10" r="2" fill="none" stroke="#2b79c2"/><path d="M9 10h8M6 14h11" stroke="#2b79c2"/></svg>
      <svg class="vi" viewBox="0 0 23 23"><path d="M6 1h11v8c0 4-2 6-5.500 6S6 13 6 9z" fill="#5ea5e6" stroke="#444"/><path class="ln" d="M6 3H1c0 5 2 8 6 8M17 3h5c0 5-2 8-6 8M11.500 15v3"/><rect class="bl" x="6" y="18" width="11" height="4"/></svg>

      <svg class="vi" viewBox="0 0 23 23"><path class="ln" d="M3 22V1h11l6 6v15zM14 1v6h6"/><path d="M7 19v-4M11 19v-6M15 19v-8" stroke="#444" stroke-width="3"/></svg>
      <svg class="vi" viewBox="0 0 23 23"><rect x="1" y="6" width="21" height="14" fill="#fff" stroke="#555"/><text class="n123" x="13" y="17.500">123</text><path d="M5 0h6L8 5h3L3 14l2-6H1z" fill="#f5a623" stroke="#c75f0a" stroke-width=".6"/></svg>
      <svg class="vi" viewBox="0 0 23 23"><path class="gr" d="M3 12h7v9H3z"/><path class="wh" d="M12 2h9v8h-9z"/><rect class="bl" x="7" y="8" width="5" height="5"/><path d="M11 12h12l-5 6v5l-2.500-1.500V18z" fill="#fff" stroke="#444" stroke-width="1.300"/><path d="M4 0h6L7 5h3L2 13l2-6H0z" fill="#f5a623" stroke="#c75f0a" stroke-width=".6"/></svg>
      <svg class="vi" viewBox="0 0 23 23"><rect x="3" y="2" width="20" height="20" fill="#fff" stroke="#1c6ea4" stroke-width="1.500"/><path d="M10 22c2-6 2-10 8-12l4-8v9l-6 5-2 6z" fill="#2b79c2"/><path d="M4 0h5v6L6.500 11 4 6z" fill="#d8702c"/><circle cx="19" cy="19" r="3.500" fill="#d8702c"/></svg>
      <svg class="vi" viewBox="0 0 23 23"><path d="M11.500 1 22 11.500 11.500 22 1 11.500z" fill="none" stroke="#8a3fa6" stroke-width="1.500"/><path d="M11.500 1v10.500M6 6.500l11 11M17 6l-5.500 5.500" fill="none" stroke="#8a3fa6" stroke-width="1.500"/></svg>
      <svg class="vi" viewBox="0 0 23 23"><path d="M1 4h13l8 8-7 8H1l8-8z" fill="#fff" stroke="#2b79c2" stroke-width="1.400"/><path d="M6 16 14 8M11 16l6-6" stroke="#2b79c2" stroke-width="1.400"/></svg>
      <span class="vmore">...</span>
    </div>
    <div class="v-div"></div>
    <div class="w-lab">Values</div>
    <div class="well well1">Add data fields here</div>
    <div class="w-head">Drill through</div>
    <div class="w-row"><span>Cross-report</span><span class="tg tg-off"><i></i>Off</span></div>
    <div class="w-row w-row2"><span>Keep all filters</span><span class="tg tg-on">On<i></i></span></div>
    <div class="well well2">Add drill-through fields here</div>
  </aside>

  <aside class="data">
    <div class="p-head d-head"><span class="p-title">Data</span><svg class="dbl" viewBox="0 0 16 14"><path d="M2 1l6 6-6 6M8 1l6 6-6 6" fill="none" stroke="#333" stroke-width="1.500"/></svg></div>
    <div class="search"><svg class="s-ic" viewBox="0 0 18 18"><circle cx="7.500" cy="7.500" r="6" fill="none" stroke="#605e5c" stroke-width="1.200"/><path d="M12 12l5 5" stroke="#605e5c" stroke-width="1.200"/></svg><span>Search</span></div>
    <div class="tree">
      <div class="t-tb"><svg class="chv" viewBox="0 0 9 14"><path d="M1 1l6 6-6 6"/></svg><svg class="t-ic" viewBox="0 0 18 18"><path d="M1 1h12v13H1zM1 5h12M5 1v13M9 1v13" class="ln"/><rect x="9" y="8" width="8" height="9" fill="#f3f2f1" stroke="#444"/><path d="M10 10h6M10 13h6M10 15.500h6" stroke="#444"/></svg><span>Salesforecast</span></div>
      <div class="t-tb"><svg class="chv" viewBox="0 0 14 9"><path d="M1 1l6 6 6-6"/></svg><svg class="t-ic" viewBox="0 0 18 18"><rect class="ln" x="1" y="2" width="15" height="14" rx="2"/><path class="ln" d="M1 7h15M1 11.500h15M6 2v14M11 2v14"/></svg><span>SuperStore_Sales_Da...</span></div>
      <div class="t-f"><span></span><i class="cb"></i><svg class="f-ic" viewBox="0 0 18 18"><path class="ln" d="M1 15V1h12v5M1 5h12M5 1v14M1 10h7M1 15h6"/><path class="ln" d="M17 8h-8l4 4-4 5h8"/></svg><span>AvgDelivery</span></div>
      <div class="t-f"><span></span><i class="cb"></i><span></span><span>Category</span></div>
      <div class="t-f"><span></span><i class="cb"></i><span></span><span>City</span></div>
      <div class="t-f"><span></span><i class="cb"></i><span></span><span>Country</span></div>
      <div class="t-f"><span></span><i class="cb"></i><span></span><span>Customer ID</span></div>
      <div class="t-f"><span></span><i class="cb"></i><span></span><span>Customer Na...</span></div>
      <div class="t-f"><svg class="chv chv-f" viewBox="0 0 9 14"><path d="M1 1l6 6-6 6"/></svg><i class="cb"></i><svg class="f-ic" viewBox="0 0 16 16"><use href="#cal"/></svg><span>Order Date</span></div>
      <div class="t-f"><span></span><i class="cb"></i><span></span><span>Order ID</span></div>
      <div class="t-f"><span></span><i class="cb"></i><span></span><span>Payment Mode</span></div>
      <div class="t-f"><span></span><i class="cb"></i><span></span><span>Product ID</span></div>
      <div class="t-f"><span></span><i class="cb"></i><span></span><span>Product Name</span></div>
      <div class="t-f"><span></span><i class="cb"></i><svg class="f-ic" viewBox="0 0 14 14"><use href="#sig"/></svg><span>Profit</span></div>
      <div class="t-f"><span></span><i class="cb"></i><svg class="f-ic" viewBox="0 0 14 14"><use href="#sig"/></svg><span>Quantity</span></div>
      <div class="t-f"><span></span><i class="cb"></i><span></span><span>Region</span></div>
      <div class="t-f"><span></span><i class="cb"></i><span></span><span>Returns</span></div>
      <div class="t-f"><span></span><i class="cb"></i><svg class="f-ic" viewBox="0 0 14 14"><use href="#sig"/></svg><span>Row ID+O6G3...</span></div>
      <div class="t-f"><span></span><i class="cb"></i><svg class="f-ic" viewBox="0 0 14 14"><use href="#sig"/></svg><span>Sales</span></div>
      <div class="t-f"><span></span><i class="cb"></i><span></span><span>Segment</span></div>
      <div class="t-f"><svg class="chv chv-f" viewBox="0 0 9 14"><path d="M1 1l6 6-6 6"/></svg><i class="cb"></i><svg class="f-ic" viewBox="0 0 16 16"><use href="#cal"/></svg><span>Ship Date</span></div>
      <div class="t-f"><span></span><i class="cb"></i><span></span><span>Ship Mode</span></div>
      <div class="t-f"><span></span><i class="cb"></i><span></span><span>State</span></div>
    </div>
    <div class="scroll"></div>
  </aside>
</main>

<footer class="status">
  <span class="st-l">Page 1 of 2</span>
  <div class="st-r">
    <span class="z-m"></span>
    <div class="z-track"><i class="z-tick"></i><i class="z-thumb"></i></div>
    <svg class="z-p" viewBox="0 0 11 11"><path d="M5.500 0v11M0 5.500h11" stroke="#605e5c" stroke-width="1.500"/></svg>
    <span class="z-v">70%</span>
    <svg class="z-fit" viewBox="0 0 20 15"><rect x=".5" y=".5" width="19" height="14" fill="none" stroke="#8a8886"/><path d="M3 6V3h3M14 3h3v3M3 9v3h3M17 9v3h-3" fill="none" stroke="#605e5c"/></svg>
  </div>
</footer>
</div>

<svg class="defs" width="0" height="0" aria-hidden="true">
  <symbol id="sig" viewBox="0 0 14 14"><path d="M13 3V1H1l6 6-6 6h12v-2" fill="none" stroke="#444" stroke-width="1.100"/></symbol>
  <symbol id="cal" viewBox="0 0 16 16"><rect x="1" y="1" width="14" height="14" rx="2" fill="none" stroke="#444" stroke-width="1.200"/><path d="M1 5h14" stroke="#444" stroke-width="1.200"/><path d="M4 8h2M7 8h2M10 8h2M4 11h2M7 11h2" stroke="#444"/></symbol>
</svg>
</body>
</html>
```
FILE: styles.css
```css
*{box-sizing:border-box}
html,body{margin:0;height:100%;overflow:hidden}
body{font-family:"Open Sans","Noto Sans","Liberation Sans",sans-serif;color:#252423;background:#f3f2f1}
.defs{position:absolute}
.app{display:grid;grid-template-rows:43px 43px 114px 790px 26px;height:1016px;width:1919px}

/* title bar */
.titlebar{background:#3b3a38;color:#fff;display:flex;justify-content:space-between;align-items:center;font-size:14px}
.tb-left{display:flex;align-items:center;padding-left:20px}
.tb-ic{width:20px;height:22px;margin-right:17px}
.tb-ic.dim{opacity:.45;margin-right:12px}
.tl{fill:none;stroke:#fff;stroke-width:1.200}
.tb-dot{width:3px;height:3px;background:#fff;border-radius:50%;margin:0 8px}
.tb-caret{border:5px solid transparent;border-top:6px solid #fff;border-bottom:0;margin-left:9px}
.tb-right{display:flex;align-items:center;padding-right:19px}
.tb-sign{font-size:14px;margin-right:11px}
.tb-av{width:26px;height:26px;margin-right:41px}
.tb-win{width:14px;height:14px}
.w-max{margin:0 41px}

/* tabs */
.tabs{background:#fafafa;display:flex;align-items:flex-start;padding-left:28px;position:relative;gap:40px;font-size:16.500px}
.tab{height:38px;line-height:38px;position:relative;color:#252423}
.tab-on{font-weight:600;margin-left:7px}
.tab-on::after{content:"";position:absolute;left:0;right:0;top:36px;height:2.500px;background:#117865}
.share{position:absolute;top:5px;right:5px;width:106px;height:30px;background:#117865;color:#fff;border:0;border-radius:4px;font:14px "Open Sans",sans-serif;display:flex;align-items:center;justify-content:center;gap:5px}
.share-ic{width:20px;height:20px}
.share-ch{width:10px;height:7px}

/* ribbon */
.ribbon{background:#fafafa;display:flex;position:relative;z-index:5;box-shadow:0 2px 5px rgba(0,0,0,.18);padding-top:2px;font-size:14px}
.grp{display:flex;flex-direction:column;height:110px;border-right:1px solid #dcdad8}
.g-clip{width:201px}.g-data{width:449px}.g-query{width:145px}.g-insert{width:183px}.g-calc{width:233px}.g-sens{width:92px}.g-share{width:75px}.g-copilot{width:163px}
.grp-body{display:grid;height:95px}
.gl{height:15px;line-height:15px;font-size:12.500px;text-align:center;color:#444;padding-top:1px}
.cols-clip{grid-template-columns:60px 135px;padding-left:5px}
.cols-data{grid-template-columns:60px 60px 78px 41px 59px 62px 74px;padding-left:5px}
.cols-query{grid-template-columns:70px 54px;padding-left:10px}
.cols-insert{grid-template-columns:48px 54px 58px;padding-left:10px}
.cols-calc{grid-template-columns:94px 58px 64px;padding-left:8px}
.cols-one{grid-template-columns:1fr;padding-right:1px}
.cols-copilot{grid-template-columns:94px 52px;padding-left:7px}
.ri{display:flex;flex-direction:column;align-items:center;padding-top:6px;min-width:0}
.ric{width:40px;height:40px;flex:none;margin-bottom:2px}
.rl{height:20px;line-height:20px;white-space:nowrap;font-size:13.700px;letter-spacing:-.1px;display:flex;align-items:center;gap:3px}
.off .rl{color:#c4c2c0}
.cv{width:8px;height:6px}
.cv path{fill:none;stroke:#333;stroke-width:1.300}
.off .cv path{stroke:#aaa}
.rsmall{color:#bdbbb8;font-size:13.700px;margin-top:-1px}
.rs{height:30px;display:flex;align-items:center}
.rs-ic{width:18px;height:20px;margin:0 6px 0 1px}
.collapse{position:absolute;right:6px;top:87px;width:10px;height:7px}
.ln{fill:none;stroke:#555;stroke-width:1.300}
.lnb{fill:none;stroke:#2b79c2;stroke-width:1.300}
.wh{fill:#fff;stroke:#555;stroke-width:1}
.dk{fill:#444}
.dk2{fill:#2b79c2}
.gyf{fill:#a8a6a4}
.gr{fill:#b9b7b5;stroke:#8a8886;stroke-width:1}
.bl{fill:#5ea5e6;stroke:#2b79c2;stroke-width:1}
.lbf{fill:#86bdf0;stroke:none}
.xl{fill:#fff;font:700 13px "Open Sans",sans-serif;text-anchor:middle}
.ta{fill:#2f86c9;font:400 23px "Open Sans",sans-serif;text-anchor:middle}
.fx{fill:#aaa;font:italic 15px "Liberation Serif",serif}
.hd rect{fill:#2f86c9}

/* main */
.main{display:grid;grid-template-columns:51px 1418px 226px 224px;height:790px;border-bottom:1px solid #e1dfdd}
.rail{background:#f3f2f1;border-right:1px solid #dcdad8;display:flex;flex-direction:column}
.rail-on,.rail-it{height:50px;display:flex;align-items:center;justify-content:center;margin-top:-.2px}
.rail-on{border-left:3px solid #117865;padding-right:3px}
.rail-ic{width:23px;height:23px}
.rail-t{font:700 8px "Open Sans",sans-serif;fill:#8a8886}
.center{display:grid;grid-template-rows:746px 44px;min-width:0}
.center-top{display:grid;grid-template-columns:1376px 42px;min-height:0}
.canvas{background:#fff;padding:13px 0 0 128px;overflow:hidden}
.page{position:relative;width:1120px;height:630px;background:linear-gradient(135deg,#0f6db2 0%,#0a5ca5 50%,#054c96 100%);box-shadow:0 2px 12px rgba(0,0,0,.18)}
.filters{background:#fff;border-left:1px solid #a19f9d;display:flex;flex-direction:column;align-items:center;padding-top:16px;position:relative}
.dbl{width:16px;height:14px;flex:none}
.funnel{width:16px;height:14px;margin-top:22px}
.f-text{writing-mode:vertical-rl;font-size:17.500px;font-weight:600;margin-top:9px;line-height:18px}

/* cards */
.card{position:absolute;background:rgba(255,255,255,.16);border:1px solid #7460a8;border-radius:13px}
.vz{position:absolute;left:-1px;top:-1px;overflow:visible}
.ct{position:relative;z-index:1;text-align:center;font:500 13.500px/27px Roboto,"Open Sans",sans-serif;letter-spacing:.4px;color:#dbe4ee}
.ct2{line-height:17px;padding-top:5px}
.v-title{left:26px;top:17px;width:379px;height:53px;display:flex;align-items:center;padding-left:9px}
.dash-title{font:700 22px "Open Sans",sans-serif;color:#63b4ff;letter-spacing:-.1px;white-space:nowrap}
.v-slicer{left:444px;top:9px;width:399px;height:69px;padding:7px 0 0 15px;border-radius:16px}
.sl-label{font-size:9.500px;line-height:16px;color:#333}
.sl-row{display:flex;gap:2px;margin:0 0 0 12px}
.sl-btn{width:85px;height:34px;background:#fff;border:1px solid #c8c6c4;display:flex;align-items:center;justify-content:center;font-size:11.500px;color:#555}
.sl-on{background:#333;color:#fff;border-color:#555;font-weight:600}
.v-seg{left:26px;top:85px;width:224px;height:157px}
.v-reg{left:26px;top:254px;width:224px;height:177px}
.v-pay{left:26px;top:444px;width:224px;height:176px}
.v-k1{left:274px;top:85px;width:131px;height:54px}
.v-k2{left:429px;top:85px;width:131px;height:54px}
.v-k3{left:584px;top:85px;width:131px;height:54px}
.v-k4{left:732px;top:85px;width:132px;height:54px}
.kv{position:absolute;left:0;right:0;top:11px;text-align:center;font:400 50px/50px Roboto,sans-serif;letter-spacing:-2px;color:#252423;white-space:nowrap}
.spark{fill:#1c4a85;opacity:.42}
.v-profit{left:274px;top:157px;width:369px;height:192px}
.v-ship{left:656px;top:157px;width:208px;height:192px}
.v-map{left:891px;top:20px;width:204px;height:330px}
.map{position:absolute;left:8px;top:42px;width:186px;height:278px}
.v-sales{left:274px;top:390px;width:382px;height:230px}
.v-cat{left:668px;top:374px;width:196px;height:229px}
.v-sub{left:890px;top:374px;width:208px;height:229px}
.v-seg .vz{width:224px;height:157px}.v-reg .vz{width:224px;height:177px}.v-pay .vz{width:224px;height:176px}
.v-k1 .vz,.v-k2 .vz,.v-k3 .vz{width:131px;height:54px}.v-k4 .vz{width:132px;height:54px}
.v-profit .vz{width:369px;height:192px}.v-ship .vz{width:208px;height:192px}
.v-sales .vz{width:382px;height:230px}.v-cat .vz{width:196px;height:229px}.v-sub .vz{width:208px;height:229px}
.vz text{font-family:"Open Sans",sans-serif}
.lb{font-size:10.500px;fill:#dbe5ef;letter-spacing:-.3px}
.lb2{font-size:10.500px;fill:#e6edf4;letter-spacing:-.2px}
.lg{font-size:10.500px;font-weight:700;fill:#fff;letter-spacing:-.3px}
.ae{text-anchor:end}
.am{text-anchor:middle}
.axt{font-size:9.500px;fill:#252b3a;text-anchor:middle}
.lead{fill:none;stroke:#2f5f8f;stroke-width:.8}
.mon text{font-size:10.500px;fill:#d3dfea;text-anchor:end;letter-spacing:-.2px}
.bl2{fill:#1f4287}
.bd{fill:#0a1254}
.water{fill:#aac8ee}
.border{fill:none;stroke:#7b7b7b;stroke-width:1.200}
.state{fill:none;stroke:#b4b1aa;stroke-width:.7;stroke-dasharray:2 1.500}
.st text{font:400 8.500px "Open Sans",sans-serif;fill:#5f5a55;letter-spacing:.1px}
.st .tm,.tm{text-anchor:middle}
.us{font:700 14.500px "Open Sans",sans-serif;fill:#111;letter-spacing:1px}
.bub circle{fill:#3a3a78;fill-opacity:.8;stroke:#24244f;stroke-width:.7}
.attr{font:400 7.500px "Open Sans",sans-serif;fill:#333;letter-spacing:-.1px}
.terms{fill:#2a5fc0;text-decoration:underline}
.bing{fill:#777;font-size:7px}

/* page bar */
.pagebar{background:#f3f2f1;display:flex;align-items:stretch}
.pb-view{width:54px;display:flex;align-items:center;justify-content:center;position:relative}
.pb-view+.pb-view{width:56px}
.pb-on::after{content:"";position:absolute;left:13px;width:30px;top:35px;height:2.500px;background:#117865}
.pb-d{width:24px;height:20px;margin-top:-7px}
.pb-p{width:16px;height:26px;margin-top:-7px}
.pb-arrows{width:50px;display:flex;gap:20px;justify-content:center;align-items:center}
.pb-a{width:8px;height:12px;margin-top:-7px}
.ptab{width:95px;background:#fff;display:flex;align-items:center;justify-content:center;font-size:14px;border-left:1px solid #c8c6c4;padding-top:2px}
.ptab-on{font-weight:600;border-bottom:5px solid #117865;width:94px;padding-top:5px}
.padd{width:49px;margin-left:1px;background:#117865;color:#fff;display:flex;align-items:center;justify-content:center;font:700 25px/1 "Open Sans",sans-serif;padding-bottom:5px}

/* viz pane */
.viz,.data{background:#f3f2f1;position:relative;min-width:0}
.viz{border-left:1px solid #d8d6d4;border-right:1px solid #d8d6d4}
.p-head{height:48px;display:flex;align-items:center;justify-content:space-between;padding:0 10px 0 9px}
.p-title{font-size:18.500px;font-weight:600;color:#252423;letter-spacing:-.1px}
.p-sub{font-size:13.500px;font-weight:600;line-height:20px;padding-left:9px;color:#333}
.modes{display:flex;align-items:center;margin:4px 0 0 9px;height:40px}
.mode-on{width:40px;height:40px;background:#d0d0d0;border-radius:3px;display:flex;align-items:center;justify-content:center}
.mode-ic{width:32px;height:32px}
.mode-fmt{width:32px;height:30px;margin-left:46px}
.notch{height:1px;background:#a19f9d;margin-top:15px;position:relative}
.notch::after{content:"";position:absolute;left:24px;top:-6px;width:10px;height:10px;background:#f3f2f1;border-left:1px solid #a19f9d;border-top:1px solid #a19f9d;transform:rotate(45deg)}
.vgrid{display:grid;grid-template-columns:repeat(6,35px);grid-auto-rows:35px;padding:8px 0 0 7px;justify-items:center;align-items:center}
.vi{width:23px;height:23px}
.vmore{font-size:15px;font-weight:600;letter-spacing:1.500px;line-height:14px;padding-bottom:14px;color:#333}
.n123{font:400 9.500px "Open Sans",sans-serif;fill:#2b79c2;text-anchor:middle;letter-spacing:-.2px}
.rtx{font:700 17px "Open Sans",sans-serif;fill:#2b79c2;text-anchor:middle}
.pyx{font:700 17px "Open Sans",sans-serif;fill:#2b79c2;text-anchor:middle;letter-spacing:-.5px}
.v-div{height:1px;background:#dcdad8;margin-top:4px}
.w-lab{font-size:13.500px;line-height:20px;padding-left:14px;margin-top:12px;color:#333}
.well{background:#fff;border:1px dashed #c8c6c4;margin:0 7px 0 4px;display:flex;align-items:center;font-size:14.200px;color:#252423}
.well1{height:34px;padding-left:13px;margin-top:6px}
.well2{height:30px;padding-left:10px;margin-top:14px;white-space:nowrap}
.w-head{font-size:13.500px;font-weight:600;line-height:20px;padding-left:14px;margin-top:15px;color:#3b3a39}
.w-row{display:flex;justify-content:space-between;align-items:center;font-size:14.500px;padding:0 27px 0 14px;height:20px;margin-top:11px;color:#333}
.w-row2{margin-top:14px}
.tg{width:40px;height:20px;border-radius:10px;display:flex;align-items:center;font-size:11px;justify-content:space-between;padding:0 5px}
.tg i{width:10px;height:10px;border-radius:50%;display:block}
.tg-off{background:#fff;border:1px solid #8a8886;color:#605e5c;justify-content:flex-start;gap:3px;padding:0 4px}
.tg-off i{background:#605e5c}
.tg-on{background:#117865;color:#fff}
.tg-on i{background:#fff}

/* data pane */
.d-head{height:49px;padding:0 9px 0 9px}
.search{height:30px;margin:8px 5px 0 6px;background:#fff;border:1px solid #c8c6c4;border-bottom-color:#8a8886;border-radius:4px;display:flex;align-items:center;padding-left:15px;font-size:16px;color:#6b7a8d}
.s-ic{width:18px;height:18px;margin-right:9px}
.tree{margin-top:11px;height:683px;overflow:hidden;font-size:14px;color:#3b3a39}
.t-tb{height:30px;display:grid;grid-template-columns:34px 25px 1fr;align-items:center;white-space:nowrap}
.t-tb .chv{justify-self:end;margin-right:7px}
.t-ic{width:18px;height:18px;margin-left:2px}
.t-f{height:30px;display:grid;grid-template-columns:55px 15px 33px 1fr;align-items:center;white-space:nowrap}
.chv{width:9px;height:14px}
.t-tb:nth-child(2) .chv{width:14px;height:9px;margin-right:5px}
.chv path{fill:none;stroke:#605e5c;stroke-width:1}
.chv-f{justify-self:end;margin-right:7px}
.cb{width:15px;height:15px;display:block;border:1px solid #8a8886;border-radius:2px;background:transparent}
.f-ic{width:16px;height:16px;margin-left:9px;overflow:visible}
.scroll{position:absolute;left:210px;top:97px;width:10px;height:645px;background:#8a8886}

/* status */
.status{background:#f3f2f1;display:flex;justify-content:space-between;align-items:center;font-size:13.500px;color:#605e5c;padding-top:5px}
.st-l{padding-left:5px}
.st-r{display:flex;align-items:center;padding-right:22px}
.z-m{width:5px;height:1.500px;background:#605e5c;margin-right:4px}
.z-track{width:125px;height:1px;background:#605e5c;position:relative}
.z-tick{position:absolute;left:62px;top:-3px;width:1px;height:7px;background:#605e5c}
.z-thumb{position:absolute;left:39px;top:-6px;width:5px;height:13px;background:#605e5c}
.z-p{width:10px;height:10px;margin-left:7px}
.z-v{margin-left:16px;font-size:14px;width:28px}
.z-fit{width:20px;height:15px;margin-left:25px}
```
